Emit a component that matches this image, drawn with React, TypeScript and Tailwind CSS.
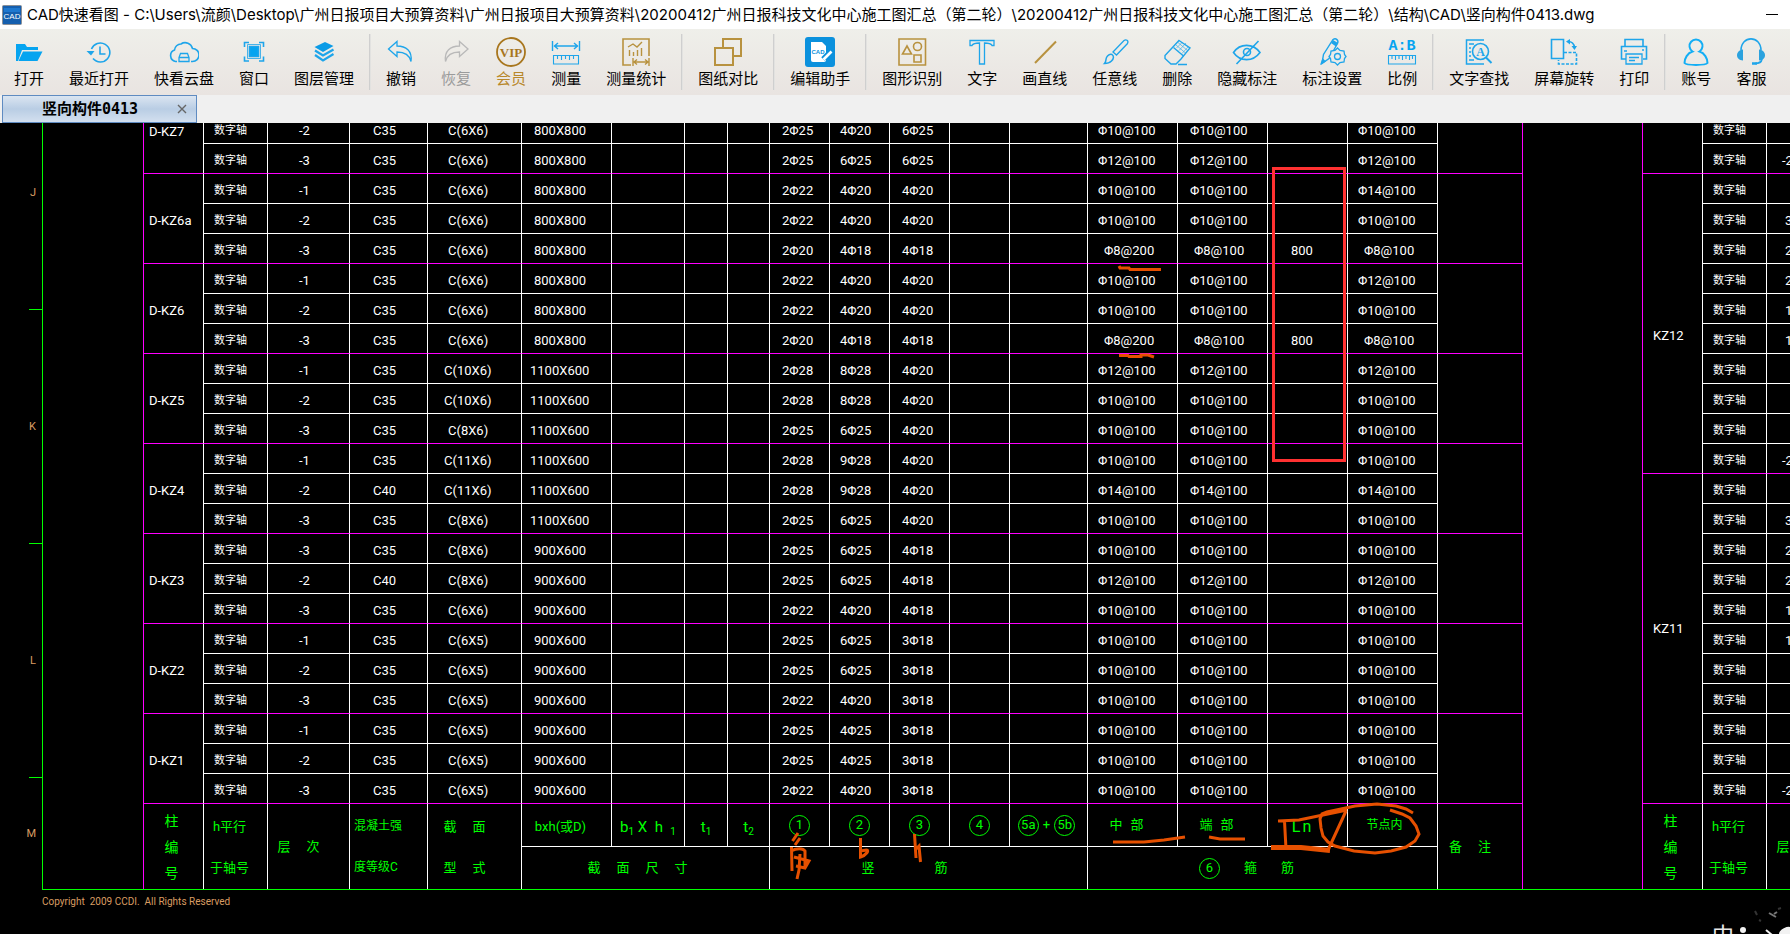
import React from 'react';

const BLUE = '#1ea5ea';
const GOLD = '#b8923f';

const Icon = ({ color = BLUE, children }: { color?: string; children: React.ReactNode }) => (
    <svg width="30" height="30" viewBox="0 0 30 30" fill="none" stroke={color} strokeWidth="1.6" aria-hidden="true">
        {children}
    </svg>
);

const icons: Record<string, React.ReactNode> = {
    '打开': (
        <Icon>
            <path d="M2 24V7h9l2 3h11v3H8L4 24z" fill="#06a4f0" stroke="none" />
            <path d="M9 14.5h19.5L23.500 24H4.500z" fill="#06a4f0" stroke="none" />
        </Icon>
    ),
    '最近打开': (
        <Icon>
            <path d="M7.500 12a9.500 9.500 0 1 1 1.500 9.500" />
            <path d="M2.500 14h8L7 18.500z" fill={BLUE} stroke="none" />
            <path d="M16 9.500V17h5.500" />
        </Icon>
    ),
    '快看云盘': (
        <Icon>
            <path d="M8 24.500H6.500a6 6 0 0 1-1-11.500A6.500 6.500 0 0 1 12 7a7.500 7.500 0 0 1 11.500 4.500 6.500 6.500 0 0 1 0 13H22" />
            <path d="M10 24.500v-4l1.500-4h7l1.500 4v4zM10.500 20.500h9" strokeWidth="1.300" />
        </Icon>
    ),
    '窗口': (
        <Icon>
            <path d="M10.500 9.500h9v10h-9z" fill="#06a4f0" />
            <path d="M8.500 7.500h13v14h-13z" strokeWidth="0.800" />
            <path d="M5.500 10V5.500H10M20 5.500h4.500V10M24.500 19.500V24H20M10 24H5.500v-4.500" />
        </Icon>
    ),
    '图层管理': (
        <Icon>
            <path d="M5.500 10 16 5l8.500 4-10.500 6z" fill="#0b9be6" stroke="none" />
            <path d="M6 13.500l8 5 10.500-6M6 18l8 5.500L24.500 17" strokeWidth="2.200" />
        </Icon>
    ),
    '撤销': (
        <Icon>
            <path d="M2.500 12 11 4.500V9c9 0 15.500 5 14 15.500C23.500 18 19 15 11 15v4.500z" strokeWidth="1.300" />
        </Icon>
    ),
    '恢复': (
        <Icon color="#b9b9b9">
            <path d="M27 12 18.500 4.500V9c-9 0-15.500 5-14 15.500C6 18 10.500 15 18.500 15v4.500z" strokeWidth="1.300" />
        </Icon>
    ),
    '会员': (
        <Icon color="#a8761d">
            <circle cx="15" cy="15" r="14" strokeWidth="1.800" />
            <text x="15" y="19.500" fill="#a8761d" stroke="none" fontSize="13" fontWeight="700" textAnchor="middle" fontFamily="Liberation Serif, serif">VIP</text>
        </Icon>
    ),
    '测量': (
        <Icon>
            <path d="M1.500 4v10M28.500 4v10M3 9h24M7 6 3.500 9 7 12M23 6l3.500 3-3.500 3" strokeWidth="1.400" />
            <path d="M2.500 18.500h25v8.500h-25zM6.500 19v3M10.500 19v4M14.500 19v3M18.500 19v4M22.500 19v3" strokeWidth="1.100" />
        </Icon>
    ),
    '测量统计': (
        <Icon color={GOLD}>
            <path d="M10 28H2V2h26v17" />
            <path d="M7 10l5-3 4 3 5-5M8.500 13v6M12.500 15v4M16.500 13v6M20.500 11v8M12 21v8M28 21v8M13 25h14M16 22.500 13 25l3 2.500M24 22.500l3 2.500-3 2.500" strokeWidth="1.400" />
        </Icon>
    ),
    '图纸对比': (
        <Icon color={GOLD}>
            <path d="M10 10.500V2h18v17h-8M2 11h18v17H2z" strokeWidth="2" />
        </Icon>
    ),
    '编辑助手': (
        <Icon>
            <rect width="30" height="30" rx="3" fill="#0b91dd" stroke="none" />
            <path d="M6 5h11l4 4v14a2 2 0 0 1-2 2H8a2 2 0 0 1-2-2z" fill="#fff" stroke="none" />
            <path d="M18 22l8-8" stroke="#0b91dd" strokeWidth="5" />
            <path d="M18.500 22.500l8-8" stroke="#fff" strokeWidth="2.600" />
            <text x="13" y="17" fill="#0b91dd" stroke="none" fontSize="6" fontWeight="700" textAnchor="middle" fontFamily="Liberation Sans, sans-serif">CAD</text>
        </Icon>
    ),
    '图形识别': (
        <Icon color={GOLD}>
            <path d="M2 2h26.500v26H2zM10 9l4.500 8h-9zM17 18h7v7h-7z" />
            <circle cx="20.500" cy="9.500" r="4" />
        </Icon>
    ),
    '文字': (
        <Icon>
            <path d="M3 3.500h24v5h-2c-1-2-3-2.500-7.500-2.500v21h-5V6C8 6 6 6.500 5 8.500H3z" strokeWidth="1.300" />
        </Icon>
    ),
    '画直线': (
        <Icon color={GOLD}>
            <path d="M5 26 26 4.500" strokeWidth="2" />
        </Icon>
    ),
    '任意线': (
        <Icon>
            <path d="M13 15 24 3.500c2-1.500 5 0 3.500 3L16.500 18zM13 15l3.500 3" strokeWidth="1.300" />
            <path d="M12 17.500c2 1.500 2 4-.500 6.500-2 2-5 2.500-7 2.500 2-2 1-4 2-6s3.500-4 5.500-3z" strokeWidth="1.500" />
        </Icon>
    ),
    '删除': (
        <Icon>
            <path d="M17 3.500 28 11l-9 11-5 5H9l-6-5.500v-3z" strokeWidth="1.400" />
            <path d="M11.500 10.500 21.500 19M16 27.500h9" strokeWidth="1.400" />
            <path d="M14 8l9.500 8M16 5.500l9.500 8M17 13.500l7-7.500M20 16.500l6-6.500M14.500 11l6-6" strokeWidth="0.600" />
        </Icon>
    ),
    '隐藏标注': (
        <Icon>
            <path d="M1.500 15.500C8 6 21 6 28 15.500 21 25 8 25 1.500 15.500zM26.500 4 4.500 27" />
            <circle cx="15" cy="15" r="3.500" />
        </Icon>
    ),
    '标注设置': (
        <Icon>
            <path d="M16 2.500c3-2 6 1 4.500 4L12 21.500l-7 5 1.500-9z" strokeWidth="1.400" />
            <path d="M16 3l5 3-2 3.500-5-3.500zM5.500 21l3.500 3.500L3 28z" fill={BLUE} stroke="none" />
            <path d="M20.500 11l2.500 2.500 4 .500.500 3.500 1.500 2-1.500 2-.500 3.500-4 .500-2.500 2.500-2.500-2.500-4-.500-.500-3.500-1.500-2 1.500-2 .500-3.500 4-.500z" fill="#ecebe8" strokeWidth="1.300" />
            <circle cx="20.500" cy="19.500" r="3" strokeWidth="1.300" />
        </Icon>
    ),
    '比例': (
        <Icon>
            <text x="15" y="13" fill="#06a4f0" stroke="none" fontSize="15" fontWeight="700" textAnchor="middle" fontFamily="Liberation Mono, monospace">A:B</text>
            <path d="M1.500 18.500h27v8.500h-27zM5 19v3M8.500 19v4M12 19v3M15.500 19v4M19 19v3M22.500 19v4M25.500 19v3" strokeWidth="1.100" />
        </Icon>
    ),
    '文字查找': (
        <Icon>
            <path d="M20 3H2.500v24H20M5 7h5M5 11h2M5 15h2M5 19h2M5 23h5" strokeWidth="1.500" />
            <circle cx="16.500" cy="14.500" r="8" />
            <path d="M22 20.500l5.500 5.500" strokeWidth="2" />
            <text x="16.500" y="19" fill={BLUE} stroke="none" fontSize="12" fontWeight="700" textAnchor="middle" fontFamily="Liberation Serif, serif">A</text>
        </Icon>
    ),
    '屏幕旋转': (
        <Icon>
            <path d="M2.500 2.500h12v19h-12z" />
            <path d="M15 15.500h12.500V27H9.500v-4" strokeDasharray="3 1.500" />
            <path d="M19 4.500c4 0 6 2 6.500 6" />
            <path d="M17 4.500 21 2v5.500zM25.500 13 22.500 9h5.500z" fill={BLUE} stroke="none" />
        </Icon>
    ),
    '打印': (
        <Icon>
            <path d="M6 9.500v-7h18v7M7 22H2.500V9.500h25V22H24" />
            <path d="M7 17h16v10H7zM10 20.500h10M10 23.500h6M23 13h2M5 14h3" strokeWidth="1.300" />
        </Icon>
    ),
    '账号': (
        <Icon color="#13aef5">
            <path d="M11.500 14.500a6.500 6.500 0 1 1 7 0c5 1.500 8 7 8 11.500-2 2.500-21 2.500-23 0 0-4.500 3-10 8-11.500z" strokeWidth="2" />
        </Icon>
    ),
    '客服': (
        <Icon>
            <path d="M5 13.500C5-2 25-2 25 13.500" />
            <path d="M7 12.500v11C-1 23-1 13.500 7 12.500zM23 12.500v11c8-.500 8-10 0-11z" fill="#2ba2de" stroke="none" />
            <path d="M26 22c-.500 3-3 4.500-7 4.500" />
            <path d="M16 26.500h5" strokeWidth="2.500" />
        </Icon>
    ),
};

const toolGroups = [
    ['打开', '最近打开', '快看云盘', '窗口', '图层管理'],
    ['撤销', '恢复', '会员', '测量', '测量统计'],
    ['图纸对比'],
    ['编辑助手'],
    ['图形识别', '文字', '画直线', '任意线', '删除', '隐藏标注', '标注设置', '比例'],
    ['文字查找', '屏幕旋转', '打印'],
    ['账号', '客服'],
];

const labelColor = (name: string) => {
    if (name === '恢复') return 'text-[#9b9b9b]';
    if (name === '会员') return 'text-[#b8882b]';
    return 'text-black';
};

// [层次, 混凝土, 型式, b×h, ①, ②, ③, 中部, 端部, Ln, 节点内]
type Row = string[];

const groups: { name: string; rows: Row[] }[] = [
    {
        name: 'D-KZ7',
        rows: [
            ['-2', 'C35', 'C(6X6)', '800X800', '2Φ25', '4Φ20', '6Φ25', 'Φ10@100', 'Φ10@100', '', 'Φ10@100'],
            ['-3', 'C35', 'C(6X6)', '800X800', '2Φ25', '6Φ25', '6Φ25', 'Φ12@100', 'Φ12@100', '', 'Φ12@100'],
        ],
    },
    {
        name: 'D-KZ6a',
        rows: [
            ['-1', 'C35', 'C(6X6)', '800X800', '2Φ22', '4Φ20', '4Φ20', 'Φ10@100', 'Φ10@100', '', 'Φ14@100'],
            ['-2', 'C35', 'C(6X6)', '800X800', '2Φ22', '4Φ20', '4Φ20', 'Φ10@100', 'Φ10@100', '', 'Φ10@100'],
            ['-3', 'C35', 'C(6X6)', '800X800', '2Φ20', '4Φ18', '4Φ18', 'Φ8@200', 'Φ8@100', '800', 'Φ8@100'],
        ],
    },
    {
        name: 'D-KZ6',
        rows: [
            ['-1', 'C35', 'C(6X6)', '800X800', '2Φ22', '4Φ20', '4Φ20', 'Φ10@100', 'Φ10@100', '', 'Φ12@100'],
            ['-2', 'C35', 'C(6X6)', '800X800', '2Φ22', '4Φ20', '4Φ20', 'Φ10@100', 'Φ10@100', '', 'Φ10@100'],
            ['-3', 'C35', 'C(6X6)', '800X800', '2Φ20', '4Φ18', '4Φ18', 'Φ8@200', 'Φ8@100', '800', 'Φ8@100'],
        ],
    },
    {
        name: 'D-KZ5',
        rows: [
            ['-1', 'C35', 'C(10X6)', '1100X600', '2Φ28', '8Φ28', '4Φ20', 'Φ12@100', 'Φ12@100', '', 'Φ12@100'],
            ['-2', 'C35', 'C(10X6)', '1100X600', '2Φ28', '8Φ28', '4Φ20', 'Φ10@100', 'Φ10@100', '', 'Φ10@100'],
            ['-3', 'C35', 'C(8X6)', '1100X600', '2Φ25', '6Φ25', '4Φ20', 'Φ10@100', 'Φ10@100', '', 'Φ10@100'],
        ],
    },
    {
        name: 'D-KZ4',
        rows: [
            ['-1', 'C35', 'C(11X6)', '1100X600', '2Φ28', '9Φ28', '4Φ20', 'Φ10@100', 'Φ10@100', '', 'Φ10@100'],
            ['-2', 'C40', 'C(11X6)', '1100X600', '2Φ28', '9Φ28', '4Φ20', 'Φ14@100', 'Φ14@100', '', 'Φ14@100'],
            ['-3', 'C35', 'C(8X6)', '1100X600', '2Φ25', '6Φ25', '4Φ20', 'Φ10@100', 'Φ10@100', '', 'Φ10@100'],
        ],
    },
    {
        name: 'D-KZ3',
        rows: [
            ['-3', 'C35', 'C(8X6)', '900X600', '2Φ25', '6Φ25', '4Φ18', 'Φ10@100', 'Φ10@100', '', 'Φ10@100'],
            ['-2', 'C40', 'C(8X6)', '900X600', '2Φ25', '6Φ25', '4Φ18', 'Φ12@100', 'Φ12@100', '', 'Φ12@100'],
            ['-3', 'C35', 'C(6X6)', '900X600', '2Φ22', '4Φ20', '4Φ18', 'Φ10@100', 'Φ10@100', '', 'Φ10@100'],
        ],
    },
    {
        name: 'D-KZ2',
        rows: [
            ['-1', 'C35', 'C(6X5)', '900X600', '2Φ25', '6Φ25', '3Φ18', 'Φ10@100', 'Φ10@100', '', 'Φ10@100'],
            ['-2', 'C35', 'C(6X5)', '900X600', '2Φ25', '6Φ25', '3Φ18', 'Φ10@100', 'Φ10@100', '', 'Φ10@100'],
            ['-3', 'C35', 'C(6X5)', '900X600', '2Φ22', '4Φ20', '3Φ18', 'Φ10@100', 'Φ10@100', '', 'Φ10@100'],
        ],
    },
    {
        name: 'D-KZ1',
        rows: [
            ['-1', 'C35', 'C(6X5)', '900X600', '2Φ25', '4Φ25', '3Φ18', 'Φ10@100', 'Φ10@100', '', 'Φ10@100'],
            ['-2', 'C35', 'C(6X5)', '900X600', '2Φ25', '4Φ25', '3Φ18', 'Φ10@100', 'Φ10@100', '', 'Φ10@100'],
            ['-3', 'C35', 'C(6X5)', '900X600', '2Φ22', '4Φ20', '3Φ18', 'Φ10@100', 'Φ10@100', '', 'Φ10@100'],
        ],
    },
];

const sideGroups = [
    { name: '', pad: '', rows: ['', '-2'] },
    { name: 'KZ12', pad: 'pt-6', rows: ['', '3', '2', '2', '1', '12', '', '', '', '-2'] },
    { name: 'KZ11', pad: 'pb-5', rows: ['', '3', '2', '2', '1', '12', '', '', '', '', '-2'] },
];

const colWidths = [60, 64, 82, 78, 94, 90, 73, 43, 42, 60, 60, 60, 60, 78, 90, 90, 80, 90, 86];

const Spread = ({ text, gap }: { text: string; gap: string }) => (
    <span className={`inline-flex ${gap}`}>
        {text.split('').map((c) => (
            <span key={c}>{c}</span>
        ))}
    </span>
);

const Circled = ({ children }: { children: React.ReactNode }) => (
    <span className="inline-flex h-[21px] w-[21px] items-center justify-center rounded-full border border-[#00ff00] text-[13px] leading-4">
        {children}
    </span>
);

const cell = 'border-t border-l p-0 pt-1 text-left font-normal whitespace-nowrap';
const head = 'border-t border-l p-0 text-center font-normal whitespace-nowrap text-[#00ff00]';

const DataCell = ({ first, pad, children }: { first: boolean; pad: string; children?: React.ReactNode }) => (
    <td className={`${cell} border-l-white ${first ? 'border-t-[#ff00ff]' : 'border-t-white'} ${pad}`}>{children}</td>
);

const AxisCell = ({ first }: { first: boolean }) => (
    <DataCell first={first} pad="pl-[10px]">
        <span className="block text-[11px] leading-4">数字轴</span>
    </DataCell>
);

const MainTable = () => (
    <table className="-mt-[10px] w-[1380px] shrink-0 table-fixed border-separate border-spacing-0">
        <colgroup>
            {colWidths.map((w, i) => (
                <col key={i} style={{ width: w }} />
            ))}
        </colgroup>
        <tbody>
            {groups.map((g) =>
                g.rows.map((r, i) => (
                    <tr key={g.name + i} className="h-[30px]">
                        {i === 0 && (
                            <th
                                scope="rowgroup"
                                rowSpan={g.rows.length}
                                className={`border-t border-l border-[#ff00ff] p-0 pl-[5px] text-left font-normal ${g.rows.length < 3 ? 'pb-6' : 'pt-1'}`}
                            >
                                {g.name}
                            </th>
                        )}
                        <AxisCell first={i === 0} />
                        <DataCell first={i === 0} pad="pl-[31px]">{r[0]}</DataCell>
                        <DataCell first={i === 0} pad="pl-[23px]">{r[1]}</DataCell>
                        <DataCell first={i === 0} pad={r[2].length > 6 ? 'pl-4' : 'pl-5'}>{r[2]}</DataCell>
                        <DataCell first={i === 0} pad={r[3].length > 7 ? 'pl-2' : 'pl-3'}>{r[3]}</DataCell>
                        <DataCell first={i === 0} pad="" />
                        <DataCell first={i === 0} pad="" />
                        <DataCell first={i === 0} pad="" />
                        <DataCell first={i === 0} pad="pl-3">{r[4]}</DataCell>
                        <DataCell first={i === 0} pad="pl-[10px]">{r[5]}</DataCell>
                        <DataCell first={i === 0} pad="pl-3">{r[6]}</DataCell>
                        <DataCell first={i === 0} pad="" />
                        <DataCell first={i === 0} pad="" />
                        <DataCell first={i === 0} pad={r[7].length < 7 ? 'pl-4' : 'pl-[10px]'}>{r[7]}</DataCell>
                        <DataCell first={i === 0} pad={r[8].length < 7 ? 'pl-4' : 'pl-3'}>{r[8]}</DataCell>
                        <DataCell first={i === 0} pad="pl-[23px]">{r[9]}</DataCell>
                        <DataCell first={i === 0} pad={r[10].length < 7 ? 'pl-4' : 'pl-[10px]'}>{r[10]}</DataCell>
                        {i === 0 && <td rowSpan={g.rows.length} className={`${cell} border-r border-[#ff00ff] border-l-white`} />}
                    </tr>
                ))
            )}
            <tr className="h-[43px]">
                <th rowSpan={2} className={`${head} border-[#ff00ff] pr-1 text-[14px] leading-[26px]`}>柱<br />编<br />号</th>
                <th rowSpan={2} className={`${head} border-t-[#ff00ff] border-l-white pr-3 text-[13px] leading-[41px]`}>h平行<br />于轴号</th>
                <th rowSpan={2} className={`${head} border-t-[#ff00ff] border-l-white pr-5 text-[13px]`}><Spread text="层次" gap="gap-4" /></th>
                <th rowSpan={2} className={`${head} border-t-[#ff00ff] border-l-white pl-1 text-left text-[12px] leading-[41px]`}>混凝土强<br />度等级C</th>
                <th rowSpan={2} className={`${head} border-t-[#ff00ff] border-l-white pr-5 text-[13px] leading-[41px]`}>
                    <Spread text="截面" gap="gap-4" /><br /><Spread text="型式" gap="gap-4" />
                </th>
                <th className={`${head} border-t-[#ff00ff] border-l-white pt-1 pr-3 text-[13px]`}>bxh(或D)</th>
                <th className={`${head} border-t-[#ff00ff] border-l-white pt-1 text-[15px]`}>b<sub className="text-[10px]">1</sub> X &nbsp;h &nbsp;<sub className="text-[10px]">1</sub></th>
                <th className={`${head} border-t-[#ff00ff] border-l-white pt-1 text-[15px]`}>t<sub className="text-[10px]">1</sub></th>
                <th className={`${head} border-t-[#ff00ff] border-l-white pt-1 text-[15px]`}>t<sub className="text-[10px]">2</sub></th>
                <th className={`${head} border-t-[#ff00ff] border-l-white align-middle`}><Circled>1</Circled></th>
                <th className={`${head} border-t-[#ff00ff] border-l-white align-middle`}><Circled>2</Circled></th>
                <th className={`${head} border-t-[#ff00ff] border-l-white align-middle`}><Circled>3</Circled></th>
                <th className={`${head} border-t-[#ff00ff] border-l-white align-middle`}><Circled>4</Circled></th>
                <th className={`${head} border-t-[#ff00ff] border-l-white align-middle`}>
                    <span className="flex items-center justify-center gap-1 pr-1"><Circled>5a</Circled>+<Circled>5b</Circled></span>
                </th>
                <th className={`${head} border-t-[#ff00ff] border-l-white pr-3 text-[13px]`}><Spread text="中部" gap="gap-2" /></th>
                <th className={`${head} border-t-[#ff00ff] border-l-white pr-3 text-[13px]`}><Spread text="端部" gap="gap-2" /></th>
                <th className={`${head} border-t-[#ff00ff] border-l-white pt-1 pr-3 text-[16px]`}><Spread text="Ln" gap="gap-[2px]" /></th>
                <th className={`${head} border-t-[#ff00ff] border-l-white pr-4 text-[12px]`}>节点内</th>
                <th rowSpan={2} className={`${head} border-r border-[#ff00ff] border-l-white pr-5 text-[13px]`}><Spread text="备注" gap="gap-4" /></th>
            </tr>
            <tr className="h-[43px]">
                <th colSpan={4} className={`${head} border-white pr-4 text-[13px]`}><Spread text="截面尺寸" gap="gap-4" /></th>
                <th colSpan={5} className={`${head} border-white pr-12 text-[13px]`}><Spread text="竖筋" gap="gap-[60px]" /></th>
                <th colSpan={4} className={`${head} border-white pr-8 text-[13px]`}>
                    <span className="inline-flex items-center gap-6"><Circled>6</Circled><span>箍</span><span>筋</span></span>
                </th>
            </tr>
        </tbody>
    </table>
);

const SideTable = () => (
    <table className="-mt-[10px] w-[206px] shrink-0 table-fixed border-separate border-spacing-0">
        <colgroup>
            <col className="w-[60px]" />
            <col className="w-[64px]" />
            <col className="w-[82px]" />
        </colgroup>
        <tbody>
            {sideGroups.map((g) =>
                g.rows.map((level, i) => (
                    <tr key={g.name + i} className="h-[30px]">
                        {i === 0 && (
                            <th scope="rowgroup" rowSpan={g.rows.length} className={`border-t border-l border-[#ff00ff] p-0 pl-[10px] text-left font-normal ${g.pad}`}>
                                {g.name}
                            </th>
                        )}
                        <AxisCell first={i === 0} />
                        <DataCell first={i === 0} pad={level[0] === '-' ? 'pl-[15px]' : 'pl-[18px]'}>{level}</DataCell>
                    </tr>
                ))
            )}
            <tr className="h-[86px]">
                <th className={`${head} border-[#ff00ff] pr-1 text-[14px] leading-[26px]`}>柱<br />编<br />号</th>
                <th className={`${head} border-t-[#ff00ff] border-l-white pr-3 text-[13px] leading-[41px]`}>h平行<br />于轴号</th>
                <th className={`${head} border-t-[#ff00ff] border-l-white pr-5 text-[13px]`}><Spread text="层次" gap="gap-4" /></th>
            </tr>
        </tbody>
    </table>
);

const Gutter = () => (
    <div className="flex w-[42px] shrink-0 flex-col text-[11px] text-[#d99c62]">
        {['J', 'K', 'L'].map((l) => (
            <div key={l} className="flex h-[234px] flex-col first:-mt-[47px]">
                <span className="flex flex-1 items-center justify-end pr-[6px]">{l}</span>
                <span className="h-px w-[13px] shrink-0 self-end bg-[#00ff00]" />
            </div>
        ))}
        <div className="flex h-[112px] items-center justify-end pr-[6px]">M</div>
    </div>
);

// hand-drawn review marks lying over the sheet
const Markup = () => (
    <svg className="pointer-events-none absolute top-0 left-0 h-full w-full" fill="none" stroke="#e65000" strokeWidth="3" aria-hidden="true">
        <rect x="1273.500" y="45.500" width="71" height="292" stroke="#ff3131" />
        <path d="M1119 143l1 2h9l1 1.500h31" />
        <path d="M1119 232.500h9l1 1h12v-1.500h7l6 2" />
        <path d="M798 710l-5.500 8M800 715l-5 7M791.500 724l.500 24M791 728c6-3 12-3 14 0v17M794 734l15 4-4 7-9-2M800 731l-1 16-2 9" />
        <path d="M860.500 715v19c6-2 9-7 6-7l-6 1" />
        <path d="M914.500 711l1.500 24M916 726l3-3 1.500 16" />
        <path d="M1113 719h31l20-2 21-3" />
        <path d="M1209 714l11 2h25" />
        <path d="M1278 698l21-1 24-5 24-5M1284.500 698l1.500 28M1346 688l-17.500 38" />
        <path d="M1271 724.500h30l29 3" strokeWidth="5" />
        <path d="M1413 690l-7-4-10-3-19-2-22 2-14 3-14 3-5 2-2 5 1 9 2 8 5 6 7 4 19 5 21 2 16-2 15-4 9-6 4-7-3-8-6-8-8-4-12-4" />
    </svg>
);

const App = () => {
    return (
        <div className="flex h-screen flex-col overflow-hidden bg-black font-['Open_Sans','Noto_Sans_CJK_SC',sans-serif]">
            <header className="flex h-[29px] shrink-0 items-center bg-white pr-3 pl-[2px]">
                <svg width="20" height="20" viewBox="0 0 20 20" aria-hidden="true">
                    <rect x="0.500" y="0.500" width="19" height="19" rx="1" fill="#155fae" stroke="#8a8f96" />
                    <path d="M2 3h16v4H2z" fill="#1e78cf" />
                    <text x="10" y="13.500" fill="#fff" fontSize="8" textAnchor="middle" fontFamily="Liberation Sans, sans-serif">CAD</text>
                </svg>
                <h1 className="min-w-0 flex-1 truncate pl-[5px] font-['Inter','Noto_Sans_CJK_SC',sans-serif] text-[15px] leading-5 text-black">
                    CAD快速看图 - C:\Users\流颜\Desktop\广州日报项目大预算资料\广州日报项目大预算资料\20200412广州日报科技文化中心施工图汇总（第二轮）\20200412广州日报科技文化中心施工图汇总（第二轮）\结构\CAD\竖向构件0413.dwg
                </h1>
                <button type="button" aria-label="最小化" className="flex h-5 w-3 items-center">
                    <span className="h-px w-full bg-black" />
                </button>
            </header>

            <nav className="flex h-[66px] shrink-0 bg-linear-to-b from-[#efefea] to-[#e9e4e1] pl-[14px]">
                {toolGroups.map((group, gi) => (
                    <React.Fragment key={gi}>
                        {gi > 0 && <span className="mx-[15px] mt-[5px] h-14 w-[2px] shrink-0 border-l border-[#cfcfcf] bg-[#e2e2e0]" />}
                        <div className="flex shrink-0 gap-[25px]">
                            {group.map((name) => (
                                <button key={name} type="button" className="flex flex-col items-center pt-2">
                                    {icons[name]}
                                    <span className={`mt-[2px] text-[15px] leading-[18px] whitespace-nowrap ${labelColor(name)}`}>{name}</span>
                                </button>
                            ))}
                        </div>
                    </React.Fragment>
                ))}
            </nav>

            <div className="flex h-7 shrink-0 bg-[#f0f0f0] pl-[2px]">
                <div className="flex w-[195px] items-center border border-[#5f8bc1] bg-linear-to-b from-[#dbe5f1] via-[#b9cde4] to-[#d3e0ef]">
                    <span className="flex-1 pl-[39px] font-['DejaVu_Sans_Mono','Noto_Sans_CJK_SC',monospace] text-[15px] leading-5 font-bold whitespace-nowrap text-black">竖向构件0413</span>
                    <button type="button" aria-label="关闭" className="mr-[9px]">
                        <svg width="10" height="10" viewBox="0 0 10 10" stroke="#666" strokeWidth="1.400">
                            <path d="M1 1l8 8M9 1L1 9" />
                        </svg>
                    </button>
                </div>
            </div>

            <main className="relative flex-1 overflow-hidden bg-black font-['Roboto','Noto_Sans_CJK_SC',sans-serif] text-[13px] leading-4 text-white">
                <div className="flex">
                    <Gutter />
                    <div className="flex min-w-0 flex-1 gap-[119px] overflow-hidden border-b border-l border-[#00ff00] pl-[100px]">
                        <MainTable />
                        <SideTable />
                    </div>
                </div>
                <p className="pt-1 pl-[42px] text-[10px] whitespace-pre text-[#d99c62]">Copyright  2009 CCDI.  All Rights Reserved</p>
                <Markup />
                {/* input method bar peeking in from the bottom edge */}
                <div className="absolute right-0 bottom-0 flex h-9 w-[100px] items-end overflow-hidden">
                    <span className="-mb-[14px] pl-[22px] text-[22px] leading-6 text-[#e8e8e8]">中</span>
                    <svg className="absolute inset-0" width="100" height="36" viewBox="0 0 100 36" aria-hidden="true">
                        <circle cx="53" cy="32" r="3" fill="#f2f2f2" />
                        <path d="M76 32l6 5M90 36c0-4 8-7 10-6v6z" stroke="#f2f2f2" strokeWidth="2" fill="#f2f2f2" />
                        <path d="M79 15l7 4M84 16l3-2" stroke="#777" strokeWidth="2" />
                        <path d="M65 13l2 4M69 22l2 1M88 11l3-1" stroke="#333" strokeWidth="2" />
                    </svg>
                </div>
            </main>
        </div>
    );
};

export default App;
